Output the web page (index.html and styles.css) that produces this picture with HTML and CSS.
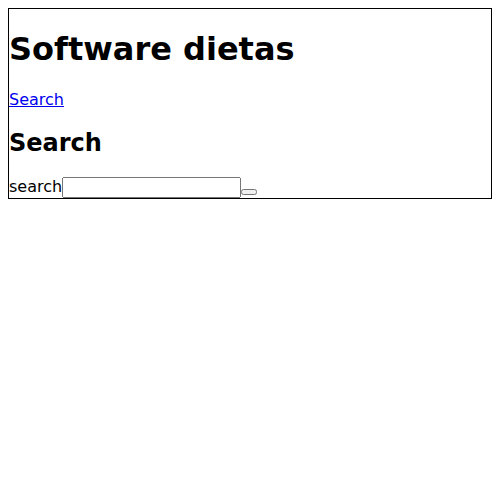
FILE: index.html
```html
<!DOCTYPE html>
<html>
<head>
<meta charset="utf-8">
<title>Software dietas</title>
<link rel="stylesheet" href="styles.css">
</head>
<body>
<div class="page">
<h1>Software dietas</h1>
<a href="#">Search</a>
<h2>Search</h2>
<form class="search-form">
<label for="q">search</label><input class="search-input" id="q" type="text"><button type="submit"></button>
</form>
</div>
</body>
</html>
```
FILE: styles.css
```css
body {
  margin: 8px;
  font-family: "DejaVu Sans", sans-serif;
}
.page {
  border: 1px solid #000;
}
.search-form {
  margin: 0;
}
.search-input {
  box-sizing: border-box;
  width: 179px;
}
```
